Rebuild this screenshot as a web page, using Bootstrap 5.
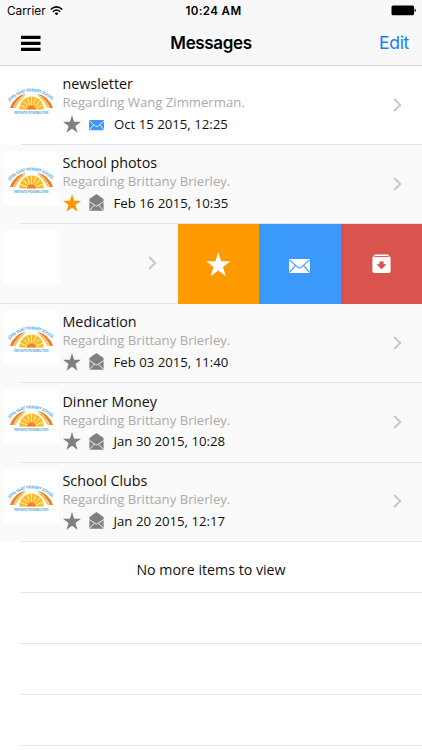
<!DOCTYPE html>
<html lang="en">
<head>
  <meta charset="UTF-8" />
  <meta name="viewport" content="width=device-width, initial-scale=1.0"/>
  <title>Messages</title>
  <link href="https://cdn.jsdelivr.net/npm/bootstrap@5.3.0/dist/css/bootstrap.min.css" rel="stylesheet"/>
  <style>
    body {
      font-family: 'Open Sans', 'Noto Sans', sans-serif;
      background: #fff;
      color: #111;
      height: 750px;
      overflow: hidden;
    }

    svg {
      display: block;
      flex-shrink: 0;
    }

    .top-area {
      height: 65.6px;
      background: #f8f8f8;
      border-bottom: 1px solid #d5d5d7;
      font-family: Inter, 'Liberation Sans', sans-serif;
      color: #000;
    }

    .status-bar {
      height: 21px;
      padding: 0 6px 0 7px;
      font-size: 11.8px;
      line-height: 22px;
    }

    .status-bar .side {
      width: 100px;
    }

    .clock {
      font-weight: 600;
      font-size: 11.6px;
      letter-spacing: .35px;
    }

    .title-bar {
      height: 44px;
      padding: 0 13px 0 21px;
    }

    .title-bar .side {
      width: 80px;
    }

    .title-bar .side-end {
      width: 88px;
    }

    .title-bar h1 {
      font-size: 17px;
      font-weight: 600;
      letter-spacing: -.35px;
    }

    .edit-link {
      font-size: 17.5px;
      letter-spacing: -.3px;
      color: #157efb;
    }

    .message-row {
      height: 79.4px;
      padding-left: 4px;
      background: linear-gradient(#e4e4e8, #e4e4e8) 21px 100% / 100% 1px no-repeat #fafafa;
    }

    .message-row.unread {
      background-color: #fff;
    }

    .message-row.swiped {
      background-position: 0 100%;
    }

    .logo-tile {
      width: 55px;
      height: 55px;
      margin-top: 6px;
      border-radius: 3px;
      background: #fff;
    }

    .message-text {
      padding: 8.5px 0 0 3.5px;
      white-space: nowrap;
    }

    .message-title {
      font-size: 14.3px;
      line-height: 19px;
    }

    .message-about {
      font-size: 13.15px;
      line-height: 18px;
      color: #aaa;
    }

    .message-date {
      font-size: 13.2px;
      line-height: 20px;
      margin-left: 10px;
    }

    .message-meta {
      height: 25px;
      color: #808080;
    }

    .chevron {
      margin: 0 20px 1.5px 0;
    }

    .swiped .chevron {
      margin-left: 89px;
    }

    .swipe-actions {
      width: 244.5px;
      color: #fff;
    }

    .swipe-actions button {
      flex: 1;
      border: 0;
      padding: 0;
      color: inherit;
    }

    .act-star { background: #ff9a00; }
    .act-mail { background: #3b99fc; --line: #3b99fc; }
    .act-archive { background: #d9534f; }

    .text-star { color: #ff9500; }
    .text-mail { color: #3b99fc; }
    .text-ink { color: #111; }

    .empty-row {
      height: 51px;
      margin-left: 21px;
      border-bottom: 1px solid #e6e6e8;
    }

    .list-end {
      font-size: 14.2px;
      padding: 6px 21px 0 0;
    }
  </style>
</head>
<body>

<svg width="0" height="0" class="position-absolute" aria-hidden="true">
  <path id="arch" d="M5.500 29.500Q27.500 9.500 49.500 29.500" fill="none"/>
  <symbol id="star" viewBox="0 0 24 24">
    <path fill="currentColor" d="M12 0l2.8 9.1H24l-7.4 5.5 2.8 9L12 18.2l-7.4 5.4 2.8-9L0 9.1h9.2z"/>
  </symbol>
  <symbol id="mail" viewBox="0 0 21 14">
    <rect width="21" height="14" rx=".8" fill="currentColor"/>
    <path d="M.4.8L8.6 8.2q1.9 1.7 3.8 0L20.6.8M.6 13.4L6.4 6.4M20.4 13.4L14.6 6.4" fill="none" stroke="var(--line, #fff)" stroke-width="1.1"/>
  </symbol>
  <symbol id="mail-open" viewBox="0 0 15 17">
    <path fill="currentColor" d="M7.5 0L14.6 5V16a.8.8 0 0 1-.8.8H1.2a.8.8 0 0 1-.8-.8V5z"/>
    <path d="M.4 7.600L6.300 11.600q1.200.8 2.400 0l5.900-4M.8 16.200L5.300 11.200M14.200 16.200L9.700 11.200" fill="none" stroke="#fafafa" stroke-width=".9"/>
  </symbol>
  <symbol id="archive" viewBox="0 0 19 20">
    <path fill="currentColor" d="M3 .6h13l2.600 3.200V17a2 2 0 0 1-2 2H2.400a2 2 0 0 1-2-2V3.800z"/>
    <path d="M2.400 2.600h14.200" stroke="#d9534f" stroke-width="1"/>
    <path fill="#d9534f" d="M7.400 7.500h4.200v2.700h3L9.500 15.300 4.400 10.200h3z"/>
  </symbol>
  <symbol id="chevron" viewBox="0 0 9 14">
    <path d="M1.200 1l6 6-6 6" fill="none" stroke="#c7c7cc" stroke-width="1.900"/>
  </symbol>
  <symbol id="sunrise" viewBox="0 0 55 55">
    <path d="M6 36Q10 24 22.500 21.500Q13 26 9 36zM49 36Q45 24 32.500 21.500Q42 26 46 36z" fill="#f07a32"/>
    <path d="M9.500 36Q13 26 22.500 22.500Q15.500 28 11.500 36zM45.500 36Q42 26 32.500 22.500Q39.500 28 43.500 36z" fill="#fbc63d"/>
    <path d="M15.300 37.600a12.200 13.200 0 0 1 24.400 0z" fill="#fbb92b"/>
    <path d="M27.500 37.600L15.700 33M27.500 37.600L18.300 28.200M27.500 37.600L22.800 25M27.500 37.600V23.500M27.500 37.600L32.300 25M27.500 37.600L36.800 28.200M27.500 37.600L39.300 33" stroke="#fff4c4" stroke-width=".9"/>
    <path d="M22.900 37.600a4.600 4.400 0 0 1 9.200 0z" fill="#f58229"/>
  </symbol>
</svg>

<header class="top-area">
  <div class="status-bar d-flex justify-content-between align-items-center">
    <div class="side d-flex align-items-center gap-1">
      <span>Carrier</span>
      <svg width="13" height="10" viewBox="0 0 13 10" fill="none" stroke="#000" stroke-width="1.500">
        <path d="M.7 3.500Q6.500-1.800 12.300 3.500M2.800 5.700Q6.500 2.400 10.200 5.700"/>
        <path d="M6.500 9.300L4.500 7.300Q6.500 5.600 8.500 7.300z" fill="#000" stroke="none"/>
      </svg>
    </div>
    <span class="clock ps-1">10:24 AM</span>
    <div class="side d-flex justify-content-end">
      <svg width="25" height="11" viewBox="0 0 25 11">
        <rect x=".5" y=".5" width="22.500" height="9.800" rx="1.500"/>
        <path d="M23.600 3.600q1.200.3 1.200 1.800t-1.200 1.800z"/>
      </svg>
    </div>
  </div>
  <div class="title-bar d-flex justify-content-between align-items-center">
    <div class="side">
      <svg width="20" height="17" viewBox="0 0 20 17" stroke="#000" stroke-width="3.300">
        <path d="M0 2.300h19.500M0 8.300h19.500M0 14.300h19.500"/>
      </svg>
    </div>
    <h1 class="m-0">Messages</h1>
    <div class="side-end text-end"><a class="edit-link text-decoration-none" href="#">Edit</a></div>
  </div>
</header>

<main>
  <div id="messageList"></div>
  <div class="empty-row list-end d-flex justify-content-center align-items-center">No more items to view</div>
  <div class="empty-row"></div>
  <div class="empty-row"></div>
  <div class="empty-row"></div>
</main>

<script>
const messages = [
  { title: 'newsletter', about: 'Wang Zimmerman', date: 'Oct 15 2015, 12:25', unread: true },
  { title: 'School photos', about: 'Brittany Brierley', date: 'Feb 16 2015, 10:35', starred: true },
  { swiped: true },
  { title: 'Medication', about: 'Brittany Brierley', date: 'Feb 03 2015, 11:40' },
  { title: 'Dinner Money', about: 'Brittany Brierley', date: 'Jan 30 2015, 10:28' },
  { title: 'School Clubs', about: 'Brittany Brierley', date: 'Jan 20 2015, 12:17' }
];

const icon = (name, w, h, cls = '') => `<svg class="${cls}" width="${w}" height="${h}"><use href="#${name}"/></svg>`;

const schoolLogo = `
  <svg width="55" height="55" viewBox="0 0 55 55" font-family="Open Sans" font-size="4.300" font-weight="700" fill="#4fa6da">
    <use href="#sunrise"/>
    <text><textPath href="#arch" textLength="48" lengthAdjust="spacingAndGlyphs">JOHN HUNT PRIMARY SCHOOL</textPath></text>
    <text x="10" y="42.200" font-size="3.700" textLength="34.500" lengthAdjust="spacingAndGlyphs">INFINITE POSSIBILITIES</text>
  </svg>`;

function swipedRow() {
  return `
    <div class="message-row swiped d-flex">
      <div class="logo-tile"></div>
      <div class="d-flex align-items-center">${icon('chevron', 9, 14, 'chevron')}</div>
      <div class="swipe-actions d-flex ms-auto">
        <button class="act-star d-flex align-items-center justify-content-center" aria-label="Star">${icon('star', 24.5, 24.5)}</button>
        <button class="act-mail d-flex align-items-center justify-content-center" aria-label="Mark unread">${icon('mail', 21, 14, 'mt-1')}</button>
        <button class="act-archive d-flex align-items-center justify-content-center" aria-label="Archive">${icon('archive', 19, 20)}</button>
      </div>
    </div>`;
}

function messageRow(m) {
  return `
    <div class="message-row d-flex ${m.unread ? 'unread' : ''}">
      <div class="logo-tile">${schoolLogo}</div>
      <div class="message-text flex-grow-1">
        <div class="message-title">${m.title}</div>
        <div class="message-about">Regarding ${m.about}.</div>
        <div class="message-meta d-flex align-items-center">
          ${icon('star', 18, 18, m.starred ? 'text-star' : '')}
          <span class="ms-2">${m.unread ? icon('mail', 15.5, 10.5, 'text-mail mt-1') : icon('mail-open', 15, 17)}</span>
          <span class="message-date text-ink">${m.date}</span>
        </div>
      </div>
      <div class="d-flex align-items-center">${icon('chevron', 9, 14, 'chevron')}</div>
    </div>`;
}

document.getElementById('messageList').innerHTML = messages.map(m => m.swiped ? swipedRow() : messageRow(m)).join('');
</script>

<script src="https://cdn.jsdelivr.net/npm/bootstrap@5.3.0/dist/js/bootstrap.bundle.min.js"></script>
</body>
</html>
